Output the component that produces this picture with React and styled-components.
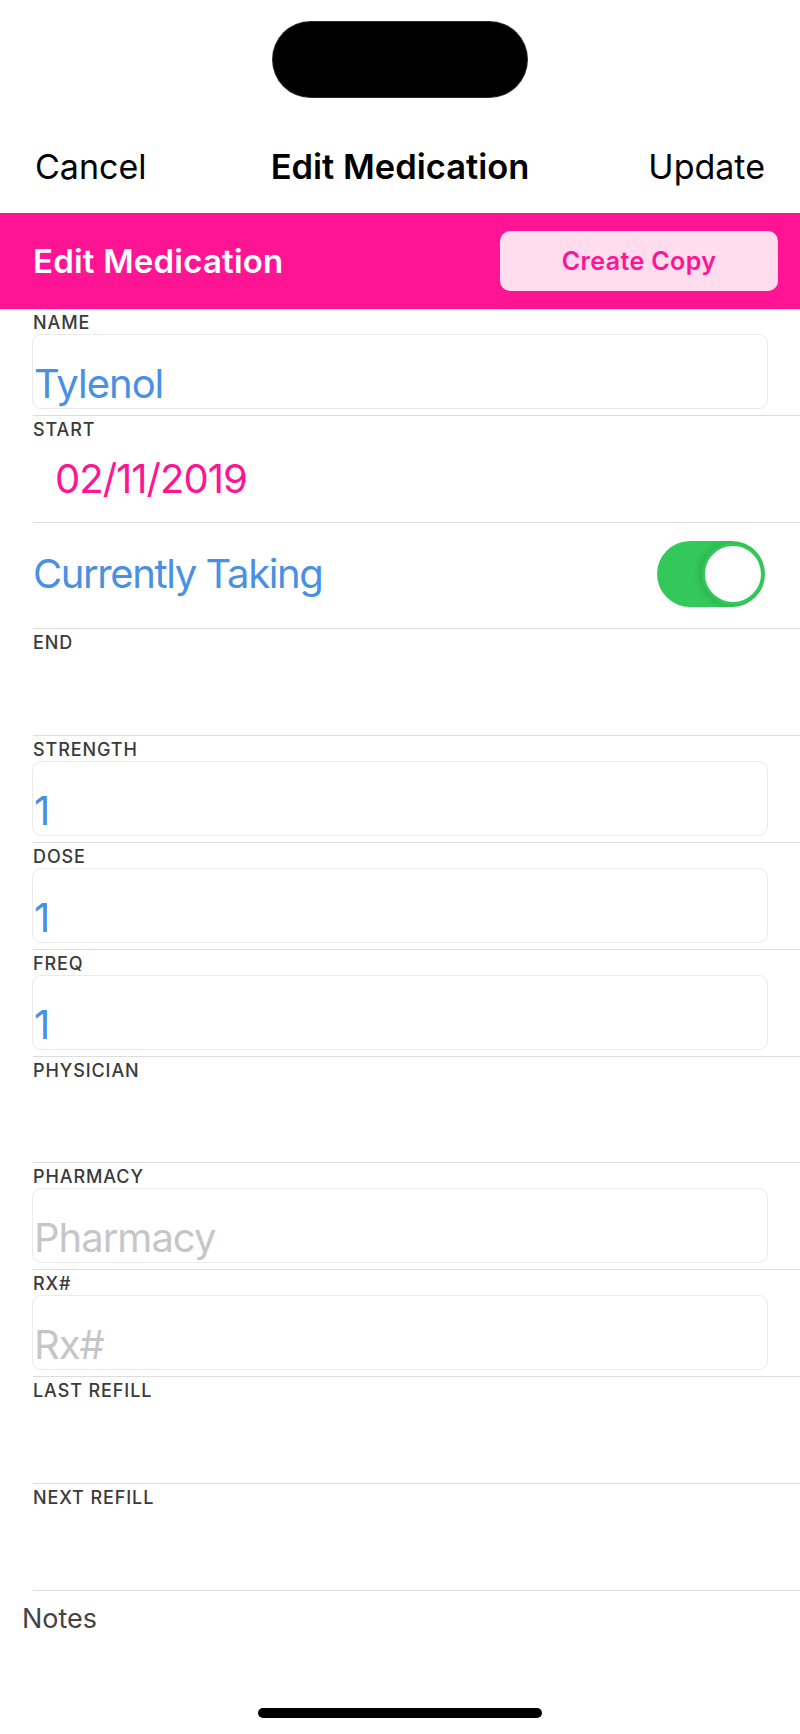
import React from "react";
import styled, { createGlobalStyle } from "styled-components";

const GlobalStyle = createGlobalStyle`
  html, body {
    margin: 0;
    padding: 0;
    background: #fff;
  }
  body {
    font-family: Inter, "Noto Sans", "Liberation Sans", sans-serif;
    -webkit-font-smoothing: antialiased;
  }
`;

const Screen = styled.div`
  width: 800px;
  min-height: 100vh;
  display: flex;
  flex-direction: column;
  background: #fff;
`;

const StatusBar = styled.div`
  height: 120px;
  display: flex;
  justify-content: center;
  padding-top: 22px;
  box-sizing: border-box;
`;

const Island = styled.div`
  width: 254px;
  height: 75px;
  border-radius: 38px;
  background: #000;
  box-shadow: 0 0 0 1px #2a2a2a;
`;

const NavBar = styled.div`
  height: 93px;
  display: flex;
  align-items: center;
  justify-content: space-between;
  padding: 0 35px 0 35px;
  box-sizing: border-box;
  position: relative;
`;

const NavButton = styled.span`
  font-size: 34px;
  color: #000;
  font-weight: 400;
`;

const NavTitle = styled.span`
  position: absolute;
  left: 0;
  right: 0;
  text-align: center;
  font-size: 34.5px;
  font-weight: 600;
  color: #000;
  pointer-events: none;
`;

const Banner = styled.div`
  height: 96px;
  background: #ff1493;
  display: flex;
  align-items: center;
  justify-content: space-between;
  padding: 0 22px 0 33px;
  box-sizing: border-box;
  box-shadow: 0 1px 0 #e2e2e2;
`;

const BannerTitle = styled.span`
  color: #fff;
  font-size: 33px;
  font-weight: 600;
  letter-spacing: 0.2px;
`;

const CopyButton = styled.button`
  width: 278px;
  height: 60px;
  border: none;
  border-radius: 10px;
  background: #ffdcee;
  color: #ff1493;
  font-family: inherit;
  font-size: 25px;
  font-weight: 600;
  letter-spacing: 0.4px;
`;

const Form = styled.div`
  display: flex;
  flex-direction: column;
`;

const Row = styled.div`
  margin-left: 33px;
  padding: 3px 0 6px 0;
  border-bottom: 1px solid #dcdcdc;
  display: flex;
  flex-direction: column;
  height: 106.8px;
  box-sizing: border-box;
  justify-content: ${(p) => (p.$center ? "center" : "flex-start")};
`;

const Label = styled.div`
  height: 22px;
  line-height: 22px;
  font-size: 18px;
  font-weight: 500;
  letter-spacing: 0.9px;
  color: #3a3a3a;
  text-transform: uppercase;
`;

const valueText = `
  font-size: 40px;
  letter-spacing: -1px;
`;

const InputBox = styled.div`
  flex: 1;
  margin: 0 32px 0 -1px;
  padding-left: 1px;
  border: 1px solid #ebebeb;
  border-radius: 9px;
  display: flex;
  align-items: flex-end;
  ${valueText}
  color: ${(p) => (p.$placeholder ? "#c6c6c8" : "#4a90e2")};
  line-height: 1.2;
`;

const DateValue = styled.div`
  flex: 1;
  display: flex;
  align-items: center;
  padding-left: 22px;
  ${valueText}
  color: #ff1493;
`;

const ToggleLine = styled.div`
  display: flex;
  align-items: center;
  justify-content: space-between;
  padding-right: 35px;
`;

const ToggleText = styled.span`
  ${valueText}
  letter-spacing: -1.4px;
  color: #4a90e2;
`;

const Switch = styled.div`
  width: 108px;
  height: 66px;
  border-radius: 33px;
  background: #34c759;
  display: flex;
  align-items: center;
  justify-content: ${(p) => (p.$on ? "flex-end" : "flex-start")};
  padding: 0 1px;
  box-sizing: border-box;
`;

const Knob = styled.div`
  width: 56px;
  height: 56px;
  border-radius: 50%;
  background: #fff;
  border: 3px solid #34c759;
  box-shadow: -3px 0 6px rgba(0, 0, 0, 0.12);
`;

const Empty = styled.div`
  flex: 1;
`;

const Notes = styled.div`
  padding: 11px 0 0 22px;
  font-size: 27px;
  color: #444;
`;

const HomeArea = styled.div`
  margin-top: auto;
  display: flex;
  justify-content: center;
  padding-bottom: 16px;
`;

const HomeIndicator = styled.div`
  width: 284px;
  height: 10px;
  border-radius: 5px;
  background: #000;
`;

const fields = [
  { label: "Name", type: "input", value: "Tylenol" },
  { label: "Start", type: "date", value: "02/11/2019" },
  { type: "toggle", value: "Currently Taking" },
  { label: "End", type: "empty" },
  { label: "Strength", type: "input", value: "1" },
  { label: "Dose", type: "input", value: "1" },
  { label: "Freq", type: "input", value: "1" },
  { label: "Physician", type: "empty" },
  { label: "Pharmacy", type: "input", placeholder: "Pharmacy" },
  { label: "Rx#", type: "input", placeholder: "Rx#" },
  { label: "Last Refill", type: "empty" },
  { label: "Next Refill", type: "empty" },
];

const FieldRow = ({ field }) => {
  if (field.type === "toggle") {
    return (
      <Row $center>
        <ToggleLine>
          <ToggleText>{field.value}</ToggleText>
          <Switch $on>
            <Knob />
          </Switch>
        </ToggleLine>
      </Row>
    );
  }
  return (
    <Row>
      <Label>{field.label}</Label>
      {field.type === "input" && (
        <InputBox $placeholder={!field.value}>
          {field.value || field.placeholder}
        </InputBox>
      )}
      {field.type === "date" && <DateValue>{field.value}</DateValue>}
      {field.type === "empty" && <Empty />}
    </Row>
  );
};

export default function App() {
  return (
    <>
      <GlobalStyle />
      <Screen>
        <StatusBar>
          <Island />
        </StatusBar>
        <NavBar>
          <NavButton>Cancel</NavButton>
          <NavTitle>Edit Medication</NavTitle>
          <NavButton>Update</NavButton>
        </NavBar>
        <Banner>
          <BannerTitle>Edit Medication</BannerTitle>
          <CopyButton>Create Copy</CopyButton>
        </Banner>
        <Form>
          {fields.map((f, i) => (
            <FieldRow key={i} field={f} />
          ))}
        </Form>
        <Notes>Notes</Notes>
        <HomeArea>
          <HomeIndicator />
        </HomeArea>
      </Screen>
    </>
  );
}
